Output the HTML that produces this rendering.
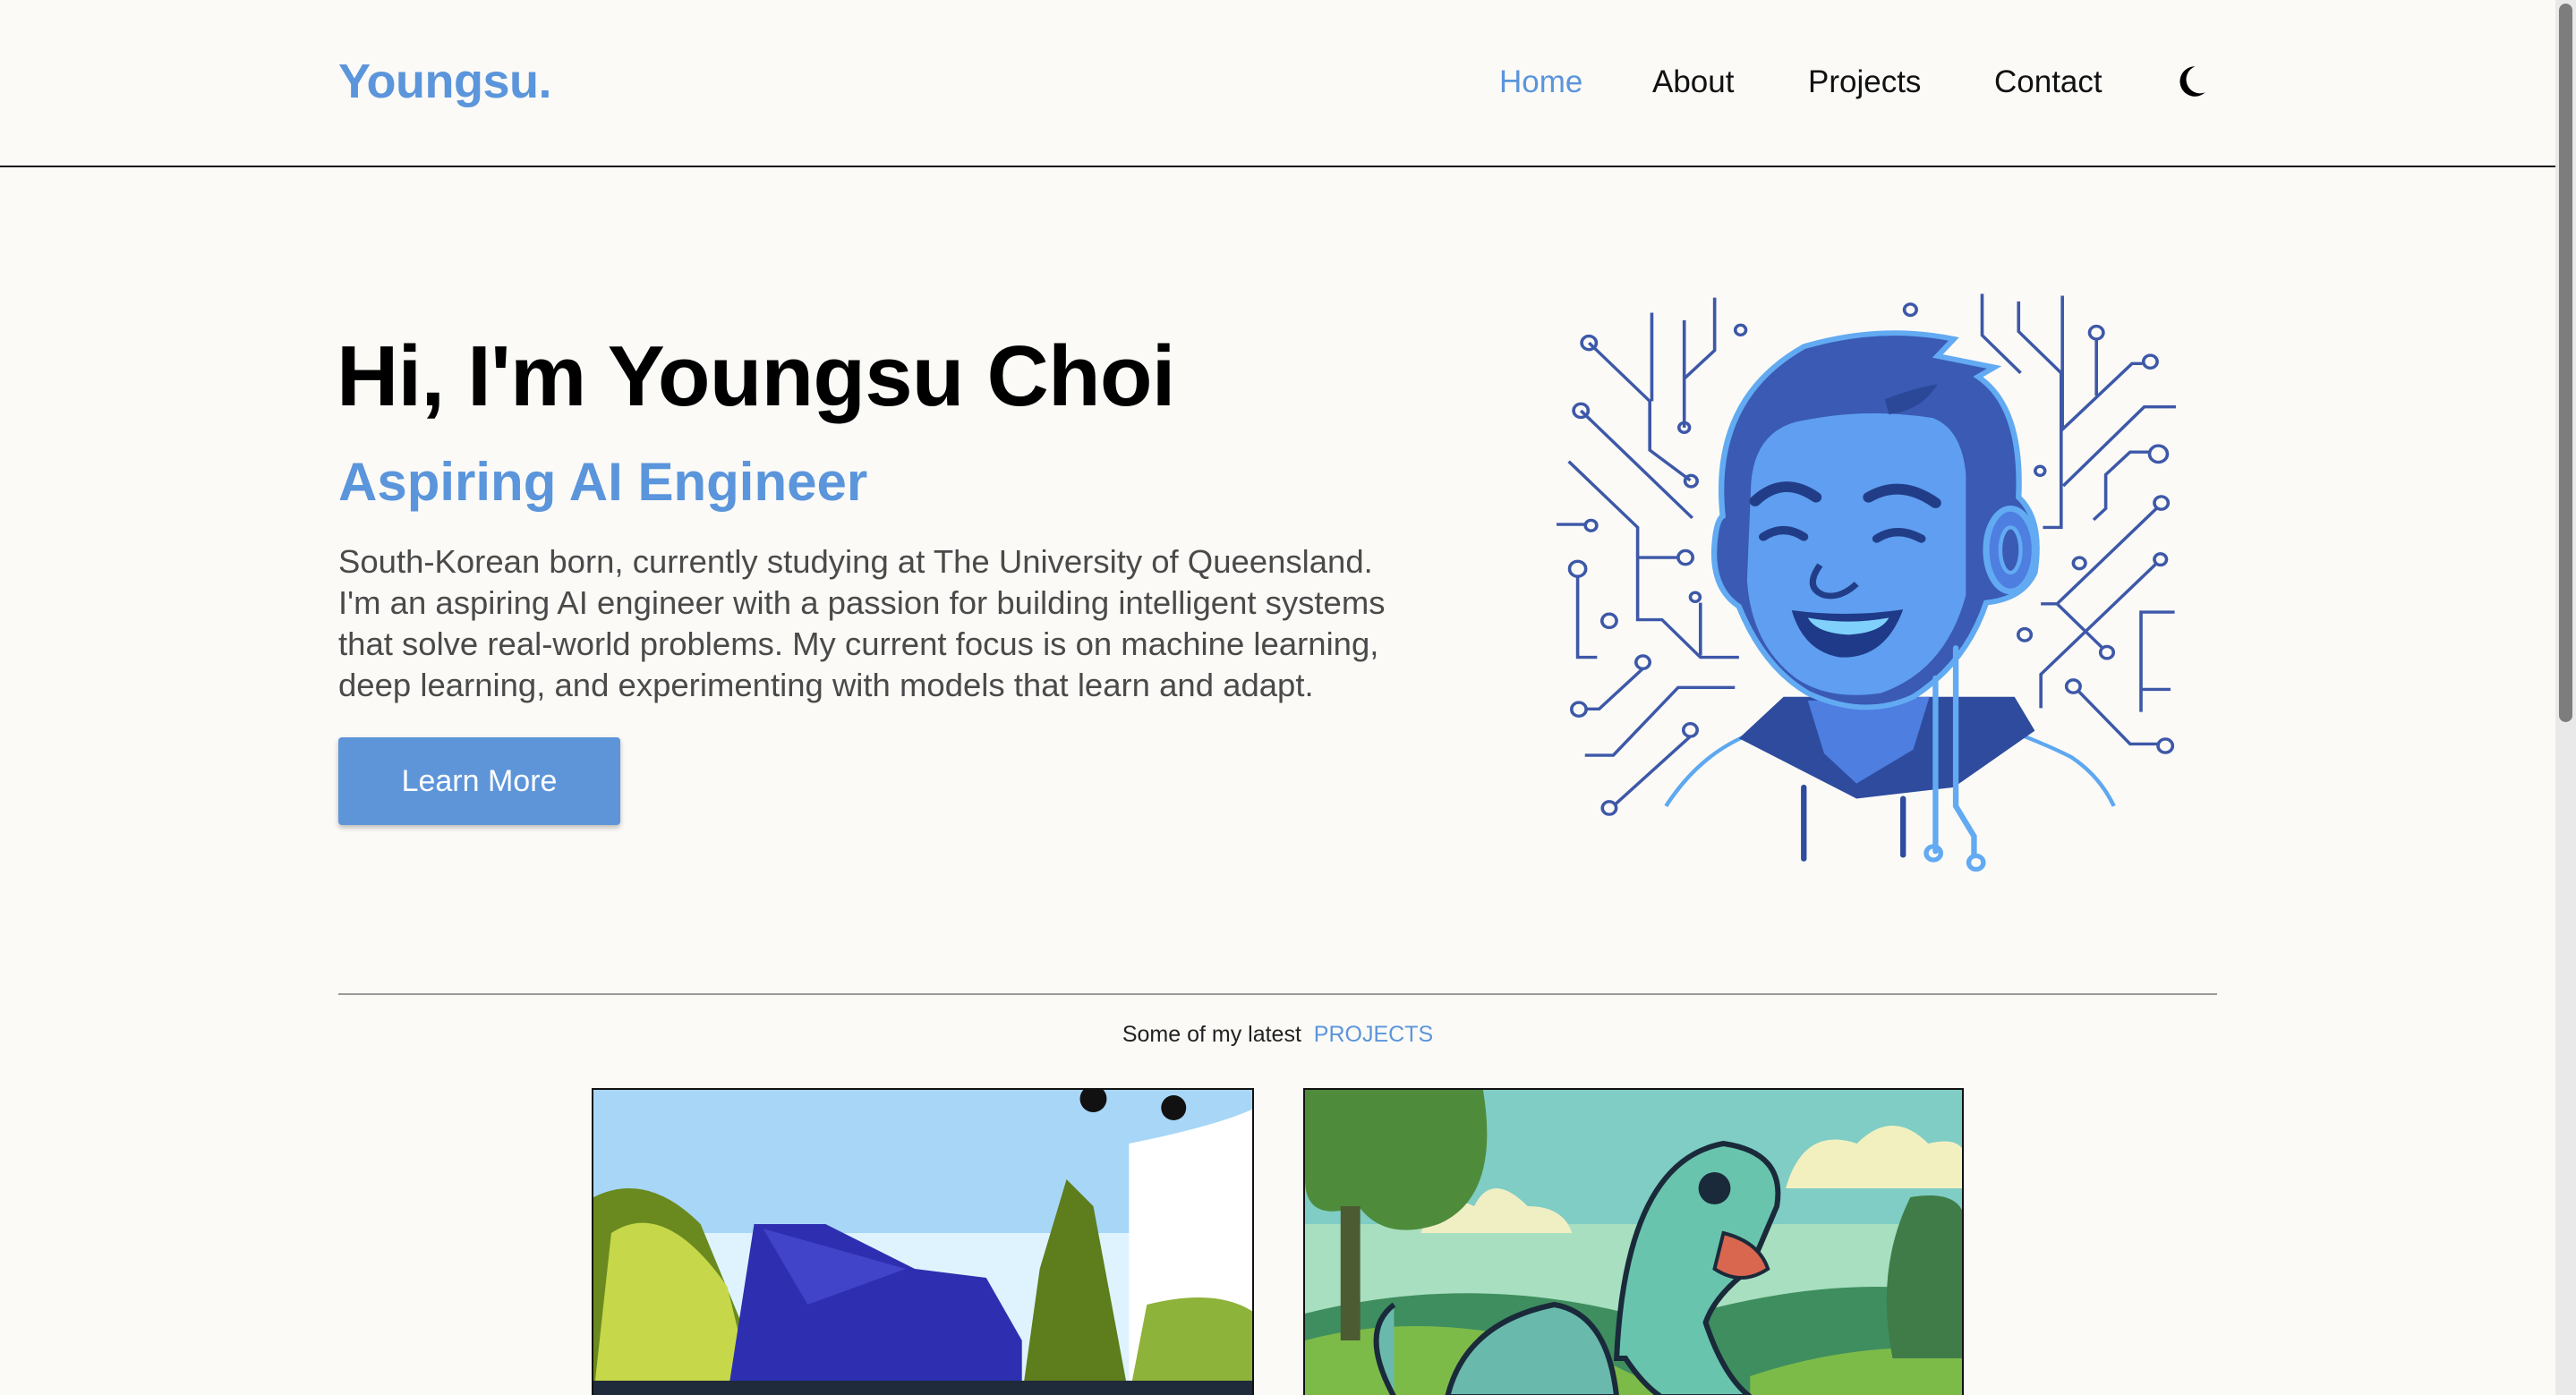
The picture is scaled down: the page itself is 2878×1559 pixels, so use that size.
<!DOCTYPE html>
<html><head><meta charset="utf-8"><style>
*{margin:0;padding:0;box-sizing:border-box}
html,body{width:2878px;height:1559px;overflow:hidden;background:#fbfaf7;font-family:"Liberation Sans",sans-serif}
.abs{position:absolute}
.nav{font-size:35px;color:#111;top:72px}
</style></head><body>
<div class="abs" style="left:378px;top:60px;font-size:54px;font-weight:bold;color:#5b95db;letter-spacing:-0.5px">Youngsu.</div>
<div class="abs nav" style="left:1675px;color:#5b95db">Home</div>
<div class="abs nav" style="left:1846px">About</div>
<div class="abs nav" style="left:2020px">Projects</div>
<div class="abs nav" style="left:2228px">Contact</div>
<svg class="abs" style="left:2430px;top:72px" width="36" height="38" viewBox="0 0 32 34"><path d="M20 2 A15 15 0 1 0 30 28 A13 13 0 0 1 20 2Z" fill="#000"/></svg>
<div class="abs" style="left:0;top:185px;width:2855px;height:2px;background:#111"></div>
<div class="abs" style="left:2855px;top:0;width:23px;height:1559px;background:#e9e9e9"></div>
<div class="abs" style="left:2859px;top:4px;width:15px;height:803px;background:#7d7d7d;border-radius:8px"></div>

<div class="abs" style="left:376px;top:366px;font-size:96px;font-weight:bold;color:#000;letter-spacing:-0.8px;white-space:nowrap">Hi, I'm Youngsu Choi</div>
<div class="abs" style="left:378px;top:504px;font-size:60px;font-weight:bold;color:#5b95db;white-space:nowrap">Aspiring AI Engineer</div>
<div class="abs" style="left:378px;top:605px;width:1300px;font-size:36.5px;line-height:46px;color:#4a4a4a;white-space:nowrap">South-Korean born, currently studying at The University of Queensland.<br>I'm an aspiring AI engineer with a passion for building intelligent systems<br>that solve real-world problems. My current focus is on machine learning,<br>deep learning, and experimenting with models that learn and adapt.</div>
<div class="abs" style="left:378px;top:824px;width:315px;height:98px;background:#5e95d9;border-radius:4px;box-shadow:0 3px 6px rgba(0,0,0,.25);color:#fff;font-size:34px;line-height:98px;text-align:center">Learn More</div>

<svg class="abs" style="left:1730px;top:320px" width="710" height="660" viewBox="0 0 1568 1568" preserveAspectRatio="none">
<g fill="none" stroke="#3d58a8" stroke-width="8">
<path d="M100 150 L250 305 V435 L350 515"/><circle cx="100" cy="150" r="18"/><circle cx="352" cy="517" r="15"/>
<path d="M255 70 V305"/><path d="M335 90 V375"/><circle cx="335" cy="375" r="13"/><path d="M410 30 V170 L335 245"/>
<circle cx="474" cy="116" r="13"/><circle cx="893" cy="62" r="15"/>
<path d="M80 330 L355 615"/><circle cx="80" cy="330" r="18"/>
<path d="M50 465 L220 640 V885 H280 L375 985 H470"/><path d="M222 720 H320"/><circle cx="338" cy="720" r="18"/>
<path d="M20 632 H90"/><circle cx="105" cy="635" r="14"/>
<circle cx="72" cy="750" r="20"/><path d="M72 770 V985 H120"/>
<circle cx="362" cy="825" r="12"/><path d="M375 840 V980"/>
<circle cx="150" cy="888" r="18"/>
<path d="M233 1015 L125 1122 H95"/><circle cx="233" cy="998" r="17"/><circle cx="75" cy="1123" r="18"/>
<path d="M460 1065 H320 L160 1245 H90"/>
<path d="M350 1195 L165 1375"/><circle cx="350" cy="1178" r="17"/><circle cx="150" cy="1385" r="17"/>
<path d="M1070 20 V130 L1165 230"/><path d="M1160 40 V120 L1265 230 V640 H1220"/><path d="M1268 25 V380 L1440 205 H1465"/><circle cx="1485" cy="200" r="17"/>
<circle cx="1352" cy="123" r="17"/><path d="M1352 140 V290"/>
<path d="M1548 320 H1470 L1270 530"/>
<circle cx="1505" cy="445" r="22"/><path d="M1483 440 H1435 L1375 500 V590 L1345 620"/>
<circle cx="1213" cy="490" r="12"/>
<circle cx="1512" cy="575" r="17"/><path d="M1500 590 L1255 843 H1215"/><path d="M1255 843 L1365 958"/><circle cx="1378" cy="972" r="16"/>
<circle cx="1310" cy="735" r="15"/><circle cx="1175" cy="925" r="16"/>
<circle cx="1510" cy="725" r="15"/><path d="M1498 738 L1215 1030 V1120"/>
<path d="M1545 865 H1462 V1130"/><path d="M1462 1070 H1535"/>
<circle cx="1295" cy="1062" r="17"/><path d="M1308 1075 L1435 1215 H1505"/><circle cx="1522" cy="1220" r="18"/>
</g>
<path d="M290 1380 Q380 1230 520 1180 L720 1310 L1000 1130 Q1180 1190 1290 1250 Q1360 1300 1395 1380" fill="none" stroke="#5ea8f0" stroke-width="10"/>
<path d="M470 1200 L580 1090 H1150 L1200 1180 L1000 1330 L760 1360 Z" fill="#2e4b9e"/>
<path d="M640 1100 L680 1240 L760 1320 L900 1230 L940 1090 Z" fill="#4d7ee0"/>
<path d="M430 610 Q400 300 630 160 Q820 100 1000 140 L960 185 L1100 215 L1060 240 Q1170 320 1160 560 Q1220 620 1200 760 Q1170 830 1080 840 Q1030 1000 900 1090 Q780 1150 640 1080 Q530 1010 470 850 Q400 800 410 680 Q415 620 430 610Z" fill="#3a5ab4" stroke="#62aaf2" stroke-width="14"/>
<path d="M500 520 Q510 390 610 360 Q780 320 950 350 Q1020 380 1030 500 L1030 820 Q980 1020 820 1080 Q690 1100 610 1040 Q500 950 490 780 Z" fill="#5f9ef0"/>
<path d="M830 300 Q900 270 960 260 Q920 330 840 340 Z" fill="#2b4898"/>
<path d="M510 570 Q580 500 660 560" fill="none" stroke="#223d88" stroke-width="28" stroke-linecap="round"/>
<path d="M790 560 Q870 510 955 575" fill="none" stroke="#223d88" stroke-width="28" stroke-linecap="round"/>
<path d="M530 665 Q580 630 630 665" fill="none" stroke="#223d88" stroke-width="22" stroke-linecap="round"/>
<path d="M810 670 Q860 635 920 670" fill="none" stroke="#223d88" stroke-width="22" stroke-linecap="round"/>
<path d="M670 740 Q630 800 680 820 Q720 830 760 790" fill="none" stroke="#223d88" stroke-width="16"/>
<path d="M600 860 Q740 880 875 858 Q830 990 720 985 Q630 970 600 860Z" fill="#1f3a88"/>
<path d="M640 880 Q740 900 840 880 Q820 920 740 925 Q660 920 640 880Z" fill="#7fd0fb"/>
<ellipse cx="1140" cy="700" rx="60" ry="110" fill="#4d7ee0" stroke="#62aaf2" stroke-width="16"/>
<ellipse cx="1140" cy="700" rx="25" ry="60" fill="#3a5ab4" stroke="#62aaf2" stroke-width="10"/>
<g fill="none" stroke="#62aaf2" stroke-width="14" stroke-linecap="round"><path d="M955 1040 V1500"/><path d="M1005 960 V1380 L1050 1460 V1510"/><path d="M630 1330 V1520" stroke="#2e4b9e"/><path d="M875 1360 V1510" stroke="#2e4b9e"/></g>
<circle cx="950" cy="1505" r="18" fill="none" stroke="#62aaf2" stroke-width="12"/><circle cx="1055" cy="1530" r="18" fill="none" stroke="#62aaf2" stroke-width="12"/>
</svg>

<div class="abs" style="left:378px;top:1110px;width:2099px;height:2px;background:#9a9a9a"></div>
<div class="abs" style="left:0;top:1142px;width:2855px;text-align:center;font-size:25px;color:#222;white-space:nowrap">Some of my latest&nbsp; <span style="color:#5b95db">PROJECTS</span></div>

<div class="abs" style="left:661px;top:1216px;width:740px;height:343px;border:2px solid #111;border-bottom:none;overflow:hidden;background:#cfefff">
<svg width="740" height="343" viewBox="0 0 742 343" preserveAspectRatio="none">
<rect width="742" height="343" fill="#dff3ff"/>
<rect width="742" height="160" fill="#8fc9f3" opacity=".7"/>
<path d="M600 60 Q700 40 742 20 V343 H600Z" fill="#fff"/>
<path d="M0 120 Q60 90 120 150 L200 343 H0Z" fill="#6a8a1f"/>
<path d="M20 160 Q80 120 150 220 L180 343 H0Z" fill="#c6d74a"/>
<path d="M180 150 L260 150 L360 200 L440 210 L480 280 L480 343 H150Z" fill="#2d2fb0"/>
<path d="M190 155 L240 240 L350 200Z" fill="#4143c8"/>
<path d="M530 100 L560 130 L600 343 H480 L500 200Z" fill="#5e7d1c"/>
<path d="M620 240 Q700 220 742 250 V343 H600Z" fill="#8eb33a"/>
<path d="M0 325 H742 V343 H0Z" fill="#1f2a3a"/>
<circle cx="560" cy="10" r="15" fill="#111"/><circle cx="650" cy="20" r="14" fill="#111"/>
</svg></div>

<div class="abs" style="left:1456px;top:1216px;width:738px;height:343px;border:2px solid #111;border-bottom:none;overflow:hidden">
<svg width="738" height="343" viewBox="0 0 742 343" preserveAspectRatio="none">
<rect width="742" height="343" fill="#7fcdc4"/>
<rect y="150" width="742" height="200" fill="#a7dfc0"/>
<path d="M540 110 Q560 40 620 60 Q660 20 700 60 Q742 50 742 80 V110Z" fill="#f3f0c0"/>
<path d="M130 160 Q150 110 190 130 Q210 90 250 130 Q290 130 300 160Z" fill="#f0efc4"/>
<path d="M0 250 Q200 200 400 260 Q600 200 742 230 V343 H0Z" fill="#3f8e5f"/>
<path d="M0 280 Q150 240 330 300 L420 343 H0Z" fill="#7dbb49"/>
<path d="M500 320 Q620 280 742 290 V343 H500Z" fill="#7dbb49"/>
<path d="M0 0 H200 Q220 120 150 150 Q90 170 60 130 Q0 150 0 100Z" fill="#4e8c3c"/>
<rect x="40" y="130" width="22" height="150" fill="#4c5b32"/>
<path d="M680 120 Q740 110 742 150 V300 H660 Q640 200 680 120Z" fill="#3f7c48"/>
<path d="M350 300 Q360 80 470 60 Q540 70 530 130 L500 200 Q460 230 450 260 Q470 320 500 343 H400 Q380 330 360 300Z" fill="#69c4ad" stroke="#1a2a3a" stroke-width="6"/>
<circle cx="460" cy="110" r="18" fill="#1a2a3a"/>
<path d="M470 160 Q510 170 520 200 Q490 220 460 200Z" fill="#d9674f" stroke="#1a2a3a" stroke-width="4"/>
<path d="M100 343 Q60 270 100 240 M160 343 Q180 260 280 240 Q340 250 350 343Z" fill="#69b9ad" stroke="#1a2a3a" stroke-width="6"/>
</svg></div>
</body></html>
